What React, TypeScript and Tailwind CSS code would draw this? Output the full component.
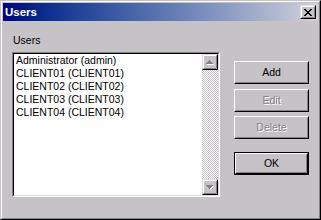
import React from 'react'

const face = 'bg-[#c6c3c6]'

const CloseGlyph = () => {
  const rows = ['XX....XX', '.XX..XX.', '..XXXX..', '...XX...', '..XXXX..', '.XX..XX.', 'XX....XX']
  return (
    <svg width="8" height="7" viewBox="0 0 8 7" shapeRendering="crispEdges">
      {rows.map((r, y) =>
        r.split('').map((c, x) => (c === 'X' ? <rect key={`${x}-${y}`} x={x} y={y} width="1" height="1" fill="#000" /> : null))
      )}
    </svg>
  )
}

const Arrow = ({ down }: { down?: boolean }) => {
  const pts = down ? '0,0 7,0 3.5,4' : '3.5,0 7,4 0,4'
  return (
    <svg width="8" height="5" viewBox="0 0 8 5" shapeRendering="crispEdges">
      <g transform="translate(1,1)">
        <polygon points={pts} fill="#fff" />
      </g>
      <polygon points={pts} fill="#848284" />
    </svg>
  )
}

const ScrollButton = ({ down }: { down?: boolean }) => (
  <div className="w-[16px] h-[16px] border border-t-[#dedfde] border-l-[#dedfde] border-r-black border-b-black">
    <div className={`w-full h-full ${face} border border-t-white border-l-white border-r-[#848284] border-b-[#848284] flex items-center justify-center`}>
      <Arrow down={down} />
    </div>
  </div>
)

interface BtnProps {
  label: string
  disabled?: boolean
  isDefault?: boolean
  className?: string
}

const Button = ({ label, disabled, isDefault, className = '' }: BtnProps) => {
  const inner = (
    <div className="w-full h-full border border-t-white border-l-white border-r-black border-b-black">
      <div className="w-full h-full border border-t-[#c6c3c6] border-l-[#c6c3c6] border-r-[#848284] border-b-[#848284] flex items-center justify-center">
        <span className={disabled ? 'text-[#848284] [text-shadow:1px_1px_0_#fff]' : 'text-black'}>{label}</span>
      </div>
    </div>
  )
  return (
    <div className={`w-[75px] h-[23px] ${className} ${isDefault ? 'border border-black' : ''}`}>
      {inner}
    </div>
  )
}

const users = ['Administrator (admin)', 'CLIENT01 (CLIENT01)', 'CLIENT02 (CLIENT02)', 'CLIENT03 (CLIENT03)', 'CLIENT04 (CLIENT04)']

export default function App() {
  return (
    <div
      className={`w-[321px] h-[220px] ${face} border border-t-[#c6c3c6] border-l-[#c6c3c6] border-r-black border-b-black text-[10.5px] leading-[13px] text-black`}
      style={{ fontFamily: '"Liberation Sans", Arial, sans-serif' }}
    >
      <div className="h-full border border-t-white border-l-white border-r-[#848284] border-b-[#848284] p-px flex flex-col">
        {/* Title bar */}
        <div className="h-[18px] flex items-center justify-between pl-[2px] pr-[2px] bg-linear-to-r from-[#000080] to-[#d2d2da]">
          <span className="text-white font-bold text-[11.5px]">Users</span>
          <div className="w-[16px] h-[14px] border border-t-[#dedfde] border-l-[#dedfde] border-r-black border-b-black">
            <div className={`w-full h-full ${face} border border-t-white border-l-white border-r-[#848284] border-b-[#848284] flex items-center justify-center`}>
              <CloseGlyph />
            </div>
          </div>
        </div>

        {/* Body */}
        <div className="flex pl-[9px]">
          <div className="w-[208px]">
            <div className="mt-[13px] h-[13px] mb-[5px] pl-px">Users</div>
            <div className="h-[145px] border border-t-[#848284] border-l-[#848284] border-r-white border-b-white">
              <div className="h-full bg-white border border-t-black border-l-black border-r-[#dedfde] border-b-[#dedfde] flex">
                <div className="flex-1 pl-[2px]">
                  {users.map((u) => (
                    <div key={u} className="h-[13px] whitespace-nowrap">{u}</div>
                  ))}
                </div>
                <div className="w-[16px] flex flex-col">
                  <ScrollButton />
                  <div className="flex-1 bg-[repeating-conic-gradient(#ffffff_0_25%,#c6c3c6_0_50%)] bg-[length:2px_2px]" />
                  <ScrollButton down />
                </div>
              </div>
            </div>
          </div>

          <div className="ml-[14px] pt-[40px] flex flex-col">
            <Button label="Add" />
            <Button label="Edit" disabled className="mt-[5px]" />
            <Button label="Delete" disabled className="mt-[4px]" />
            <Button label="OK" isDefault className="mt-[13px]" />
          </div>
        </div>
      </div>
    </div>
  )
}
